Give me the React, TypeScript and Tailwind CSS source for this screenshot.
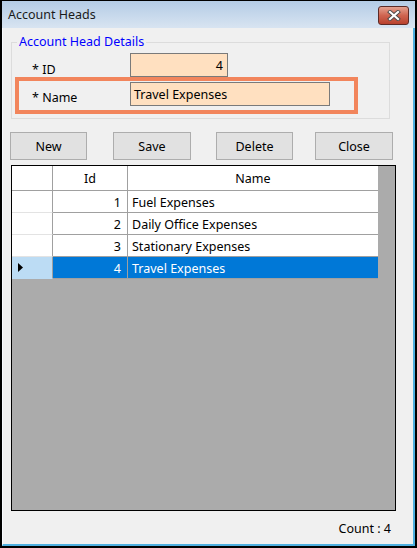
import React from "react";

const rows = [
  { id: 1, name: "Fuel Expenses" },
  { id: 2, name: "Daily Office Expenses" },
  { id: 3, name: "Stationary Expenses" },
  { id: 4, name: "Travel Expenses" },
];

export default function App() {
  const font = { fontFamily: '"Noto Sans", "Open Sans", sans-serif' };
  return (
    <div
      className="w-[417px] h-[548px] bg-black border-l-2 border-t border-r-2 border-b-2 border-black flex flex-col text-[12.5px] leading-[15px] text-black"
      style={font}
    >
      {/* Title bar */}
      <div className="h-[27px] shrink-0 bg-gradient-to-b from-[#b4cce6] to-[#d8e4f1] flex items-center pl-[6px] pr-[6px]">
        <span className="text-[12.5px] text-[#1a1a1a]">Account Heads</span>
        <div className="ml-auto mt-[1px] w-[31px] h-[19px] rounded-[3px] border border-[#5c2a26] bg-gradient-to-b from-[#e3a190] via-[#cf6450] to-[#b8412d] flex items-center justify-center">
          <svg width="14" height="11" viewBox="0 0 14 11">
            <path d="M3 2 L11 9 M11 2 L3 9" stroke="#4a4a4a" strokeWidth="4" strokeLinecap="square" />
            <path d="M3 2 L11 9 M11 2 L3 9" stroke="#ffffff" strokeWidth="2.2" strokeLinecap="square" />
          </svg>
        </div>
      </div>

      {/* Body */}
      <div className="flex-1 bg-[#f0f0f0] border-l border-l-[#f8fbff] border-r-2 border-r-[#4fb0e0] border-b-2 border-b-[#4fb0e0] flex flex-col">
        {/* Group box */}
        <div className="relative ml-[8px] mt-[14px] w-[379px] h-[77px] border border-[#dcdcdc] flex flex-col">
          <span className="absolute left-[5px] -top-[9px] px-[2px] bg-[#f0f0f0] text-[#0000ff] leading-[15px]">
            Account Head Details
          </span>
          <div className="flex mt-[10px] pl-[20px] h-[24px]">
            <span className="w-[98px] mt-[9px] leading-[15px]">* ID</span>
            <div className="w-[98px] h-[24px] bg-[#ffe0c0] border border-[#7a7a7a] flex items-center justify-end pr-[4px]">
              4
            </div>
          </div>
          <div className="ml-[3px] w-[343px] h-[37px] border-[4px] border-[#f2855c] flex pl-[13px]">
            <span className="w-[98px] mt-[9px] leading-[15px]">* Name</span>
            <div className="mt-[1px] w-[200px] h-[24px] bg-[#ffe0c0] border border-[#7a7a7a] flex items-center pl-[3px]">
              Travel Expenses
            </div>
          </div>
        </div>

        {/* Buttons */}
        <div className="flex mt-[13px] h-[28px]">
          <button className="ml-[7px] w-[77px] h-[28px] bg-[#e1e1e1] border border-[#adadad] flex items-center justify-center">New</button>
          <button className="ml-[26px] w-[78px] h-[28px] bg-[#e1e1e1] border border-[#adadad] flex items-center justify-center">Save</button>
          <button className="ml-[25px] w-[77px] h-[28px] bg-[#e1e1e1] border border-[#adadad] flex items-center justify-center">Delete</button>
          <button className="ml-[22px] w-[78px] h-[28px] bg-[#e1e1e1] border border-[#adadad] flex items-center justify-center">Close</button>
        </div>

        {/* Grid */}
        <div className="ml-[8px] mt-[5px] w-[385px] h-[346px] border border-black bg-[#ababab] flex flex-col">
          <div className="flex h-[25px] w-[366px] bg-white border-b border-[#a0a0a0]">
            <div className="w-[41px] border-r border-[#a0a0a0]" />
            <div className="w-[75px] border-r border-[#a0a0a0] flex items-center justify-center">Id</div>
            <div className="w-[250px] flex items-center justify-center">Name</div>
          </div>
          {rows.map((r) => {
            const sel = r.id === 4;
            return (
              <div key={r.id} className="flex h-[22px] w-[366px]">
                <div
                  className={
                    sel
                      ? "w-[41px] bg-[#bcdcf4] border-r border-[#a0a0a0] border-b border-b-[#bcdcf4] flex items-center pl-[6px]"
                      : "w-[41px] bg-white border-r border-[#a0a0a0] border-b border-b-[#e3e3e3]"
                  }
                >
                  {sel && (
                    <svg width="5" height="9" viewBox="0 0 5 9">
                      <path d="M0 0 L5 4.5 L0 9 Z" fill="#000" />
                    </svg>
                  )}
                </div>
                <div
                  className={
                    sel
                      ? "w-[75px] bg-[#0078d7] text-white border-r border-b border-[#a0a0a0] flex items-center justify-end pr-[6px] pt-[1px]"
                      : "w-[75px] bg-white border-r border-b border-[#a0a0a0] flex items-center justify-end pr-[6px] pt-[1px]"
                  }
                >
                  {r.id}
                </div>
                <div
                  className={
                    sel
                      ? "w-[250px] bg-[#0078d7] text-white border-b border-[#a0a0a0] flex items-center pl-[4px] pt-[1px]"
                      : "w-[250px] bg-white border-b border-[#a0a0a0] flex items-center pl-[4px] pt-[1px]"
                  }
                >
                  {r.name}
                </div>
              </div>
            );
          })}
        </div>

        {/* Count */}
        <div className="flex justify-end pr-[22px] mt-[10px]">
          <span>Count : 4</span>
        </div>
      </div>
    </div>
  );
}
